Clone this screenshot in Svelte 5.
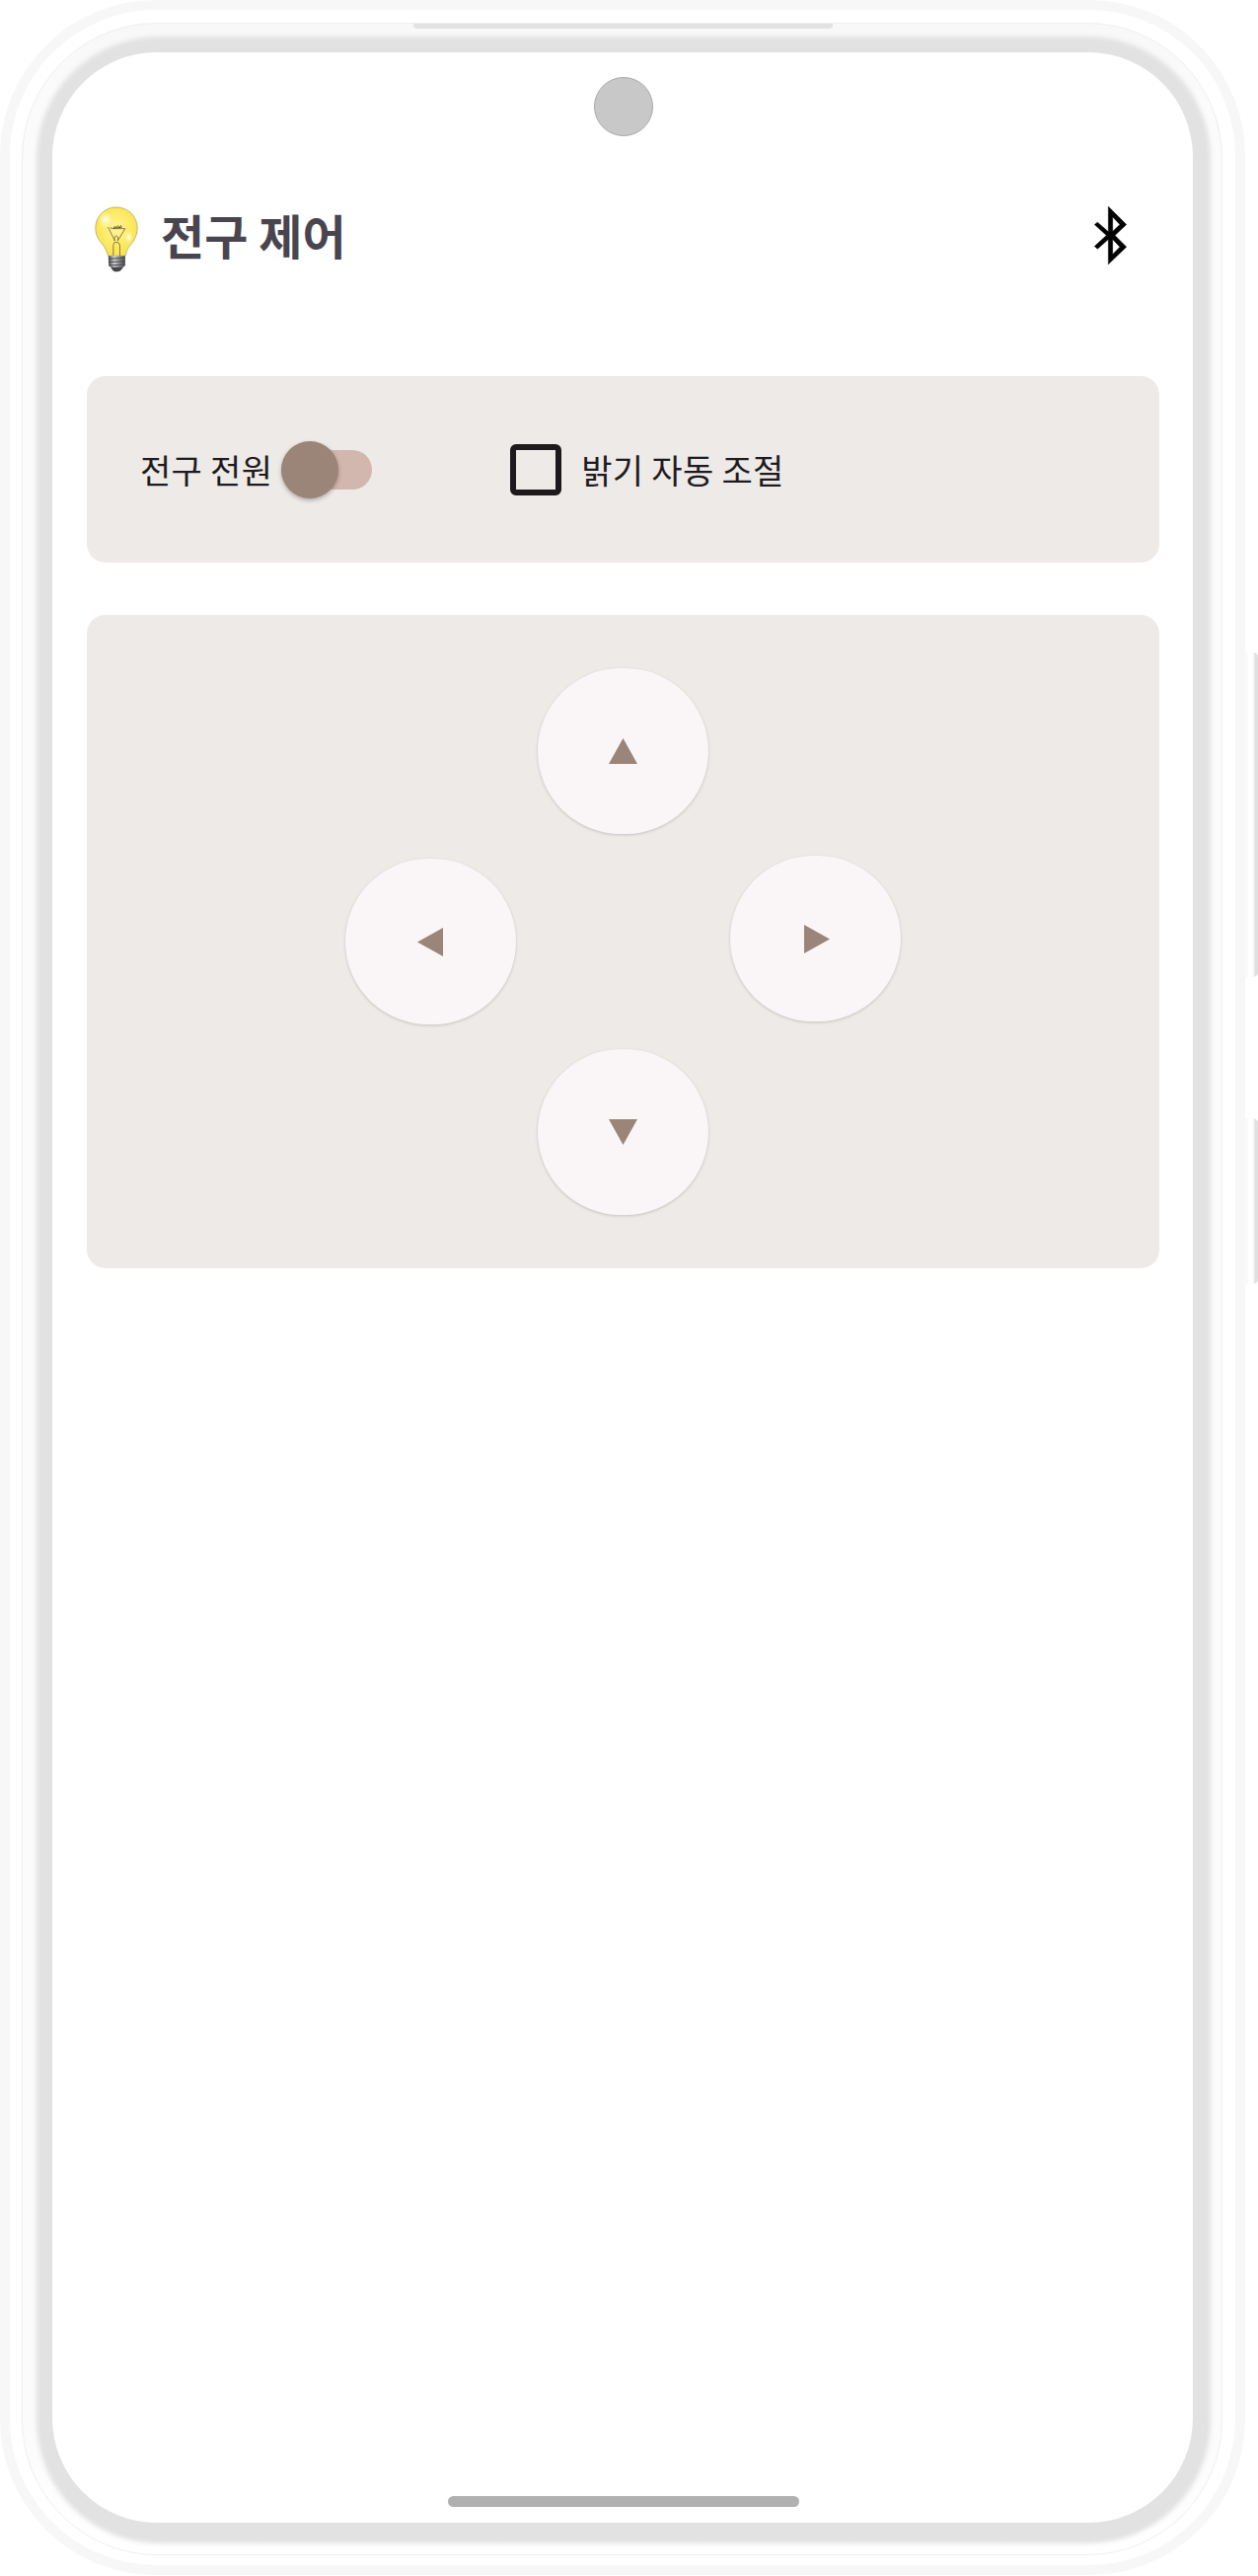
<script>
  let power = $state(false);
  let auto = $state(false);
</script>

{#snippet arrow(dir, points, w, h)}
  <button class="pad {dir}" aria-label={dir}>
    <svg width={w} height={h} viewBox="0 0 {w} {h}"><polygon {points} /></svg>
  </button>
{/snippet}

<div class="stage">
  <div class="shell">
    <div class="bezel">
      <div class="rim"></div>
      <div class="speaker"></div>
      <main class="screen">
        <div class="camera"></div>
        <header>
          <svg class="bulb" viewBox="45 50 140 210">
            <defs>
              <radialGradient id="glass" cx="0.5" cy="0.45" r="0.6">
                <stop offset="0" stop-color="#fff3a0" />
                <stop offset="0.55" stop-color="#fdeb66" />
                <stop offset="1" stop-color="#f8e04e" />
              </radialGradient>
              <radialGradient id="shine">
                <stop offset="0" stop-color="#fffff4" />
                <stop offset="1" stop-color="#fff7b0" stop-opacity="0" />
              </radialGradient>
              <linearGradient id="metal">
                <stop offset="0" stop-color="#3f3f42" />
                <stop offset="0.35" stop-color="#d2d2d2" />
                <stop offset="0.65" stop-color="#8c8c8e" />
                <stop offset="1" stop-color="#454548" />
              </linearGradient>
            </defs>
            <path d="M113 59C77 59 50 87 50 122C50 150 65 163 77 180C84 190 85 198 88 207H141C143 196 145 189 151 180C164 163 177 149 177 122C177 87 149 59 113 59Z" fill="url(#glass)" stroke="#b9a95c" stroke-width="2.5" />
            <ellipse cx="80" cy="97" rx="24" ry="27" fill="url(#shine)" />
            <ellipse cx="151" cy="150" rx="13" ry="20" fill="url(#shine)" />
            <path d="M88 119L108 160M140 124L118 160M104 206V174Q104 165 113 165Q124 165 124 176V206M108 162V149Q113 142 118 149V162M100 124H140" fill="none" stroke="#75652b" stroke-width="2.5" />
            <path d="M97 120V124M104 123Q108 112 112 122Q118 108 122 122Q129 108 129 120Z" fill="none" stroke="#5c5128" stroke-width="2.5" />
            <path d="M89 207H140V236L130 245Q127 254 115 255Q103 254 100 245L90 236Z" fill="url(#metal)" />
            <path d="M89 216L140 213M89 226L140 223M90 236L140 233" stroke="#4b4b4d" stroke-width="3" />
            <path d="M96 241H134L129 248Q124 255 115 255Q104 255 100 247Z" fill="#454548" />
          </svg>
          <h1>전구 제어</h1>
          <svg class="bluetooth" viewBox="447 629 99 176">
            <path fill-rule="evenodd" d="M490 629L545 684L510 717L545 752L490 805V729L457 758L448 750L484 717L448 684L457 677L490 706ZM503 661V705L525 684ZM503 729V775L525 752Z" />
          </svg>
        </header>

        <section class="card options">
          <span class="label">전구 전원</span>
          <button class="switch" class:on={power} role="switch" aria-checked={power} aria-label="전구 전원" onclick={() => (power = !power)}>
            <span class="thumb"></span>
          </button>
          <button class="box" class:checked={auto} role="checkbox" aria-checked={auto} aria-label="밝기 자동 조절" onclick={() => (auto = !auto)}></button>
          <span class="label">밝기 자동 조절</span>
        </section>

        <section class="card dpad">
          {@render arrow('up', '14.5,0 29,26 0,26', 29, 26)}
          <div class="middle">
            {@render arrow('left', '0,14.5 26,0 26,29', 26, 29)}
            {@render arrow('right', '26,14.5 0,0 0,29', 26, 29)}
          </div>
          {@render arrow('down', '14.5,26 0,0 29,0', 29, 26)}
        </section>

        <div class="home"></div>
      </main>
    </div>
  </div>
  <div class="side">
    <div class="key volume"></div>
    <div class="key power"></div>
  </div>
</div>

<style>
  :global(body) {
    margin: 0;
    background: #fff;
    overflow: hidden;
  }
  * {
    box-sizing: border-box;
  }
  button {
    padding: 0;
    border: 0;
  }
  .stage {
    display: flex;
    width: 1275px;
    height: 2610px;
    font-family: 'Noto Sans CJK KR', sans-serif;
  }
  .shell {
    flex: none;
    width: 1262px;
    height: 2609px;
    padding: 13px 13px 10px 12px;
    border: 10px solid #f7f7f7;
    border-radius: 158px;
  }
  .bezel {
    position: relative;
    width: 1217px;
    height: 2566px;
    padding: 29px 0 0 30px;
    border: 1px solid #efefef;
    border-radius: 137px;
    background: linear-gradient(#f8f8f8, #fbfbfb 80px, #fbfbfb 2430px, #fff);
  }
  /* soft grey band between the frame and the display */
  .rim {
    position: absolute;
    inset: 13px 11px 11px 14px;
    border-radius: 124px;
    background: #e2e2e2;
    filter: blur(2px);
  }
  .speaker {
    position: absolute;
    top: 0;
    left: 396px;
    width: 425px;
    height: 5px;
    border-radius: 0 0 4px 4px;
    background: #e2e2e2;
  }
  .screen {
    position: relative;
    display: flex;
    flex-direction: column;
    width: 1156px;
    height: 2503px;
    padding: 25px 34px 16px 35px;
    border-radius: 106px;
    background: #fff;
  }
  .camera {
    align-self: center;
    width: 60px;
    height: 60px;
    border: 1px solid #aaa;
    border-radius: 50%;
    background: #c8c8c8;
  }
  header {
    display: flex;
    align-items: center;
    height: 72px;
    margin-top: 68px;
    padding: 0 33px 0 7px;
  }
  .bulb {
    width: 47px;
    height: 70px;
  }
  h1 {
    margin: -10px auto 0 21px;
    font-size: 48px;
    line-height: 72px;
    font-weight: 700;
    color: #49454f;
  }
  .bluetooth {
    width: 33px;
    height: 59px;
    margin-top: -7px;
  }
  .bluetooth path {
    stroke: #000;
    stroke-width: 1.5;
  }
  .card {
    flex: none;
    border-radius: 19px;
    background: #eeeae7;
  }
  .options {
    display: flex;
    align-items: center;
    height: 189px;
    margin-top: 103px;
    padding-left: 54px;
  }
  .label {
    font-size: 34px;
    line-height: 50px;
    letter-spacing: 0.3px;
    color: #1d1b20;
    white-space: nowrap;
  }
  .switch {
    display: flex;
    align-items: center;
    width: 92px;
    height: 40px;
    margin-left: 9px;
    border-radius: 20px;
    background: #d2b7ae;
  }
  .thumb {
    flex: none;
    width: 58px;
    height: 58px;
    border-radius: 50%;
    background: #9b8478;
    box-shadow: 0 2px 4px rgba(0, 0, 0, 0.28);
  }
  .switch.on {
    justify-content: flex-end;
  }
  .box {
    width: 52px;
    height: 52px;
    margin: 0 20px 0 140px;
    border: 6px solid #1d191c;
    border-radius: 6px;
    background: transparent;
  }
  .box.checked {
    background: #9b8478;
  }
  .dpad {
    display: flex;
    flex-direction: column;
    align-items: center;
    height: 662px;
    margin-top: 53px;
    padding-top: 54px;
  }
  .middle {
    display: flex;
    gap: 217px;
    margin: 22px 0 25px;
  }
  .pad {
    display: flex;
    align-items: center;
    justify-content: center;
    width: 173px;
    height: 168px;
    border-radius: 84px;
    background: #faf6f7;
    box-shadow: 0 1px 3px rgba(60, 50, 60, 0.22);
  }
  .left {
    margin-top: 3px;
    padding-right: 2px;
  }
  .right {
    padding-left: 3px;
  }
  .pad polygon {
    fill: #9b8478;
  }
  .home {
    align-self: center;
    width: 356px;
    height: 11px;
    margin-top: auto;
    border-radius: 6px;
    background: #b0b0b0;
  }
  /* hardware keys on the right edge */
  .side {
    display: flex;
    flex-direction: column;
    gap: 143px;
    padding-top: 661px;
  }
  .key {
    width: 13px;
    height: 329px;
    border-radius: 0 5px 5px 0;
    background: linear-gradient(90deg, #fafafa 3px, #fff 3px, #fff 7px, #f2f2f2 9px, #e0e0e0 10px);
  }
  .key.power {
    height: 168px;
  }
</style>
